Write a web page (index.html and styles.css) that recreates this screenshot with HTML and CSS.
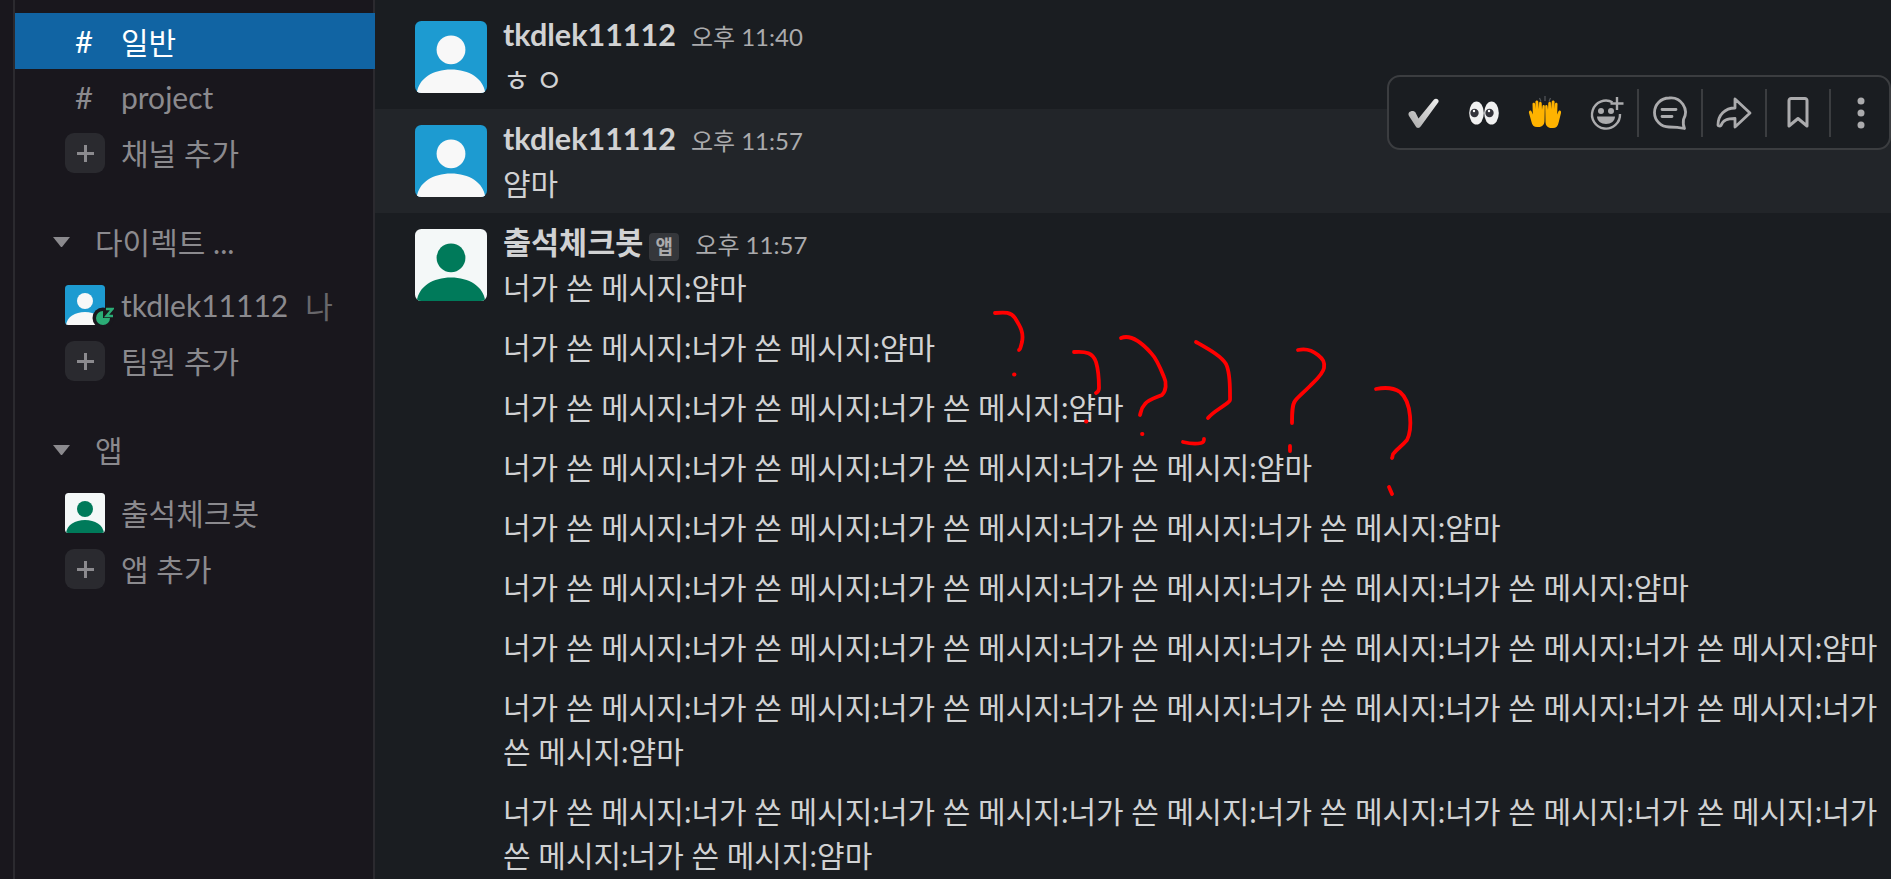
FILE: index.html
```html
<!DOCTYPE html>
<html lang="ko">
<head>
<meta charset="utf-8">
<title>일반</title>
<link rel="stylesheet" href="styles.css">
</head>
<body>
<div class="app">
  <div class="rail"></div>
  <nav class="sidebar">
    <div class="row active"><span class="hash">#</span><span class="label">일반</span></div>
    <div class="row"><span class="hash">#</span><span class="label">project</span></div>
    <div class="row"><span class="plus"><svg viewBox="0 0 17 17" width="17" height="17"><path d="M8.5 0v17M0 8.500h17" stroke="currentColor" stroke-width="3"/></svg></span><span class="label ko">채널 추가</span></div>

    <div class="row head sec"><span class="caret"></span><span class="ko">다이렉트 ...</span></div>
    <div class="row dm">
      <span class="mini"><svg viewBox="0 0 40 40" width="40" height="40"><use href="#p-blue"/></svg><span class="status"><svg viewBox="0 0 24 24" width="24" height="24"><circle cx="13" cy="15" r="10.500" fill="#19171d"/><circle cx="13" cy="15" r="7" fill="#2bac76"/><path d="M13 15 L21 15 L21 8 L13 8Z" fill="#19171d"/><path d="M16 6h6.500l-6 7h6.500" fill="none" stroke="#2bac76" stroke-width="2.400"/></svg></span></span>
      <span class="label">tkdlek11112</span><span class="me">나</span>
    </div>
    <div class="row"><span class="plus"><svg viewBox="0 0 17 17" width="17" height="17"><path d="M8.5 0v17M0 8.500h17" stroke="currentColor" stroke-width="3"/></svg></span><span class="label ko">팀원 추가</span></div>

    <div class="row head sec"><span class="caret"></span><span class="ko">앱</span></div>
    <div class="row dm">
      <span class="mini"><svg viewBox="0 0 40 40" width="40" height="40"><use href="#p-green"/></svg></span>
      <span class="label ko">출석체크봇</span>
    </div>
    <div class="row"><span class="plus"><svg viewBox="0 0 17 17" width="17" height="17"><path d="M8.5 0v17M0 8.500h17" stroke="currentColor" stroke-width="3"/></svg></span><span class="label ko">앱 추가</span></div>
  </nav>

  <main class="main">
    <article class="msg">
      <svg class="avatar" viewBox="0 0 40 40"><use href="#p-blue"/></svg>
      <div class="body">
        <div class="meta"><span class="name">tkdlek11112</span><span class="time">오후 11:40</span></div>
        <p class="jamo">ㅎㅇ</p>
      </div>
    </article>
    <article class="msg hover">
      <svg class="avatar" viewBox="0 0 40 40"><use href="#p-blue"/></svg>
      <div class="body">
        <div class="meta"><span class="name">tkdlek11112</span><span class="time">오후 11:57</span></div>
        <p>얌마</p>
      </div>
      <div class="toolbar">
        <span class="tool"><svg viewBox="0 0 40 40" width="40" height="40"><defs><linearGradient id="chk" x1="0" y1="1" x2="1" y2="0"><stop offset="0" stop-color="#a8a8a8"/><stop offset="1" stop-color="#f0f0f0"/></linearGradient></defs><path d="M5 19.500c2-2 5-2 6.500 0l3 6L30 6.500c2-2 5.500 0 4.500 2.500L17 33c-1.500 2.500-4.500 2.500-5.500 0L5 23c-.7-1.300-.7-2.500 0-3.500z" fill="url(#chk)"/></svg></span>
        <span class="tool"><svg viewBox="0 0 40 40" width="40" height="40"><ellipse cx="11.500" cy="20" rx="7.300" ry="11.500" fill="#f0f0f0"/><ellipse cx="26.500" cy="20" rx="7.300" ry="11.500" fill="#f0f0f0"/><circle cx="9.500" cy="20" r="4.200" fill="#33333a"/><circle cx="24.500" cy="20" r="4.200" fill="#33333a"/><circle cx="9" cy="18" r="1.200" fill="#fff"/><circle cx="24" cy="18" r="1.200" fill="#fff"/></svg></span>
        <span class="tool"><svg viewBox="0 0 40 40" width="40" height="40"><path d="M3 20c-.6-2.500 1.800-3.500 2.800-1l1 2.500L6.500 11c0-1.800 2.400-1.800 2.600 0l.6 5-.3-7c0-2 2.800-2 2.900 0l.6 7 .2-6c.1-1.800 2.600-1.600 2.600.3l.3 6.500.5-3.800c.2-1.500 2.200-1.300 2.300.4L18.500 28c-.2 3.500-2 6-6 6H11c-3 0-5-2-5.500-5z" fill="#ffb300"/><path d="M35 20c.6-2.500-1.800-3.500-2.800-1l-1 2.500.3-10.500c0-1.800-2.400-1.800-2.600 0l-.6 5 .3-7c0-2-2.800-2-2.900 0l-.6 7-.2-6c-.1-1.800-2.600-1.600-2.600.3l-.3 6.500-.5-3.800c-.2-1.500-2.200-1.300-2.300.4l.3 15.600c.2 3.500 2 6 6 6H27c3 0 5-2 5.500-5z" fill="#ffb300"/><path d="M19 3v5M13.500 5l1.500 3.500M24.500 5L23 8.500" stroke="#55585c" stroke-width="1.200"/></svg></span>
        <span class="tool"><svg viewBox="0 0 40 40" width="40" height="40" fill="none" stroke="#ababad" stroke-width="2.400"><path d="M25.500 9.200A14 14 0 1 0 33 21"/><path d="M30 4v13M23.500 10.500h13"/><circle cx="14" cy="18" r="3" fill="#ababad" stroke="none"/><circle cx="24" cy="18" r="3" fill="#ababad" stroke="none"/><path d="M10 23.500h18c0 4.500-4 7.500-9 7.500s-9-3-9-7.500z" fill="#ababad" stroke="none"/></svg></span>
        <span class="sep"></span>
        <span class="tool wide"><svg viewBox="0 0 40 40" width="40" height="40" fill="none" stroke="#ababad" stroke-width="2.800" stroke-linecap="round"><path d="M19 5a14.500 14.500 0 1 0 0 29c5 0 11 .5 15.500 1.500-1.500-3-1.500-5.500-1-9A14.500 14.500 0 0 0 19 5z" stroke-linejoin="round"/><path d="M12 16.500h14M12 23.500h10"/></svg></span>
        <span class="sep"></span>
        <span class="tool wide"><svg viewBox="0 0 40 40" width="40" height="40" fill="none" stroke="#ababad" stroke-width="2.800" stroke-linejoin="round" stroke-linecap="round"><path d="M21 6l15 14-15 14v-8.500c-8 0-12 1.500-14 7-1 1-2.500.5-3-.5 0-10 7-17 17-17z"/></svg></span>
        <span class="sep"></span>
        <span class="tool wide"><svg viewBox="0 0 40 40" width="40" height="40" fill="none" stroke="#ababad" stroke-width="3" stroke-linejoin="round"><path d="M11 7.500c0-1 1-2 2-2h14c1 0 2 1 2 2V33l-9-7.500L11 33z"/></svg></span>
        <span class="sep"></span>
        <span class="tool wide"><svg viewBox="0 0 40 40" width="40" height="40" fill="#ababad"><circle cx="19" cy="8" r="3.500"/><circle cx="19" cy="20" r="3.500"/><circle cx="19" cy="32" r="3.500"/></svg></span>
      </div>
    </article>
    <article class="msg">
      <svg class="avatar" viewBox="0 0 40 40"><use href="#p-green"/></svg>
      <div class="body">
        <div class="meta"><span class="name">출석체크봇</span><span class="badge">앱</span><span class="time">오후 11:57</span></div>
        <p>너가 쓴 메시지:얌마</p>
        <p class="para">너가 쓴 메시지:너가 쓴 메시지:얌마</p>
        <p class="para">너가 쓴 메시지:너가 쓴 메시지:너가 쓴 메시지:얌마</p>
        <p class="para">너가 쓴 메시지:너가 쓴 메시지:너가 쓴 메시지:너가 쓴 메시지:얌마</p>
        <p class="para">너가 쓴 메시지:너가 쓴 메시지:너가 쓴 메시지:너가 쓴 메시지:너가 쓴 메시지:얌마</p>
        <p class="para">너가 쓴 메시지:너가 쓴 메시지:너가 쓴 메시지:너가 쓴 메시지:너가 쓴 메시지:너가 쓴 메시지:얌마</p>
        <p class="para">너가 쓴 메시지:너가 쓴 메시지:너가 쓴 메시지:너가 쓴 메시지:너가 쓴 메시지:너가 쓴 메시지:너가 쓴 메시지:얌마</p>
        <p class="para">너가 쓴 메시지:너가 쓴 메시지:너가 쓴 메시지:너가 쓴 메시지:너가 쓴 메시지:너가 쓴 메시지:너가 쓴 메시지:너가 쓴 메시지:얌마</p>
        <p class="para">너가 쓴 메시지:너가 쓴 메시지:너가 쓴 메시지:너가 쓴 메시지:너가 쓴 메시지:너가 쓴 메시지:너가 쓴 메시지:너가 쓴 메시지:너가 쓴 메시지:얌마</p>
      </div>
    </article>
    <svg class="scribble" viewBox="0 0 1516 879" fill="none" stroke="#f00" stroke-width="3.800" stroke-linecap="round" stroke-linejoin="round">
      <g transform="translate(585 290)">
        <path d="M35 23c10-1 16-1 20 5 5 8 9 14 7 24-1 4-2 8-3 8"/>
        <path d="M54 84.500l.5 0"/>
        <path d="M114 62c12-1 19 1 22 10 3 10 3 20 3 26 0 3-1 4-3 5"/>
        <path d="M126 131.500l.5 0"/>
        <path d="M161 48c10-4 22 6 30 15 5 5 9 14 13 24 3 6 2 14-2 18-7 3-14 5-17 9-4 4-4 8-5 11"/>
        <path d="M182 144l.5 0"/>
        <path d="M236 52c14 8 25 14 30 22 4 8 4 20 4 30 0 8 1 6-4 10-8 6-13 8-18 14"/>
        <path d="M223 152c8 2 14 2 18 1 3-1 3-2 3-4"/>
        <path d="M338 60c8-2 14 0 20 5 5 4 7 7 6 13-1 6-8 12-14 18-8 8-12 11-15 15-3 4-3 12-3 22"/>
        <path d="M330 156v5"/>
        <path d="M416 99c10-2 18-1 24 3 6 5 9 13 10 24 1 10 0 18-3 24-5 6-9 8-13 13-2 1-1 4-2 5"/>
        <path d="M429 197l3 7"/>
      </g>
    </svg>
  </main>
</div>

<svg class="defs" width="0" height="0" aria-hidden="true">
  <defs>
    <clipPath id="rr"><rect width="40" height="40" rx="3.500"/></clipPath>
    <g id="p-blue" clip-path="url(#rr)">
      <rect width="40" height="40" fill="#1d9bd1"/>
      <circle cx="20" cy="16" r="8" fill="#f8f8f8"/>
      <path d="M1 40c1-8 9-13 19-13s18 5 19 13z" fill="#f8f8f8"/>
    </g>
    <g id="p-green" clip-path="url(#rr)">
      <rect width="40" height="40" fill="#f4f8f8"/>
      <circle cx="20" cy="16" r="8" fill="#007a5a"/>
      <path d="M1 40c1-8 9-13 19-13s18 5 19 13z" fill="#007a5a"/>
    </g>
  </defs>
</svg>
</body>
</html>
```
FILE: styles.css
```css
* { box-sizing: border-box; }
html, body { margin: 0; height: 100%; overflow: hidden; }
body {
  background: #1a1d21;
  color: #d1d2d3;
  font-family: Lato, "Noto Sans CJK KR", sans-serif;
  font-size: 30px;
}
.app { display: flex; height: 879px; overflow: hidden; }
.rail { width: 15px; flex: none; background: #19171d; border-right: 2px solid #2b2a2f; }
.sidebar {
  width: 360px; flex: none; padding-top: 13px;
  background: #19171d; border-right: 2px solid #2b2a2f;
  color: #8b8a8e;
}
.row { display: flex; align-items: center; height: 56px; padding-left: 50px; }
.row.active { background: #1164a3; color: #fff; margin-right: -2px; position: relative; }
.hash { width: 40px; text-align: center; font-size: 31px; margin-left: -1px; margin-right: 1px; }
.label { margin-left: 16px; white-space: nowrap; }
.ko { padding-bottom: 2px; }
.plus {
  width: 40px; height: 40px; border-radius: 9px; background: #2a2a2f;
  display: flex; align-items: center; justify-content: center; color: #8b8a8e;
}
.plus svg { display: block; }
.head { padding-left: 38px; }
.sec { margin-top: 33px; margin-bottom: 7px; }
.caret {
  width: 17px; margin-right: 25px;
  border-left: 8.5px solid transparent; border-right: 8.5px solid transparent;
  border-top: 10px solid #8b8a8e;
}
.mini { position: relative; width: 40px; height: 40px; flex: none; }
.mini > svg { display: block; }
.status { position: absolute; right: -9px; bottom: -2px; width: 24px; height: 24px; }
.status svg { display: block; }
.me { margin-left: 17px; color: #68676b; }

.main { flex: 1; min-width: 0; position: relative; padding-top: 5px; }
.msg { display: flex; position: relative; padding: 16px 8px 16px 40px; }
.msg.hover { background: #222529; }
.avatar { width: 72px; height: 72px; flex: none; display: block; }
.body { margin-left: 16px; min-width: 0; flex: 1; margin-bottom: -8px; }
.meta { display: flex; align-items: baseline; height: 36px; line-height: 26px; }
.name { font-weight: 700; font-size: 30.500px; color: #d1d2d3; }
.time { margin-left: 15px; font-size: 24px; color: #ababad; }
.badge {
  margin-left: 6px; width: 30px; height: 28px; line-height: 28px; text-align: center;
  font-size: 19px; font-weight: 700; border-radius: 4px;
  background: #35373b; color: #ababad;
}
.badge + .time { margin-left: 16px; }
p { margin: 0; line-height: 44px; color: #d1d2d3; }
.para { margin-top: 16px; }
.jamo { letter-spacing: 5px; }
.toolbar {
  position: absolute; left: 1012px; top: -34px; width: 504px; height: 75px;
  display: flex; align-items: center; padding-left: 4px;
  background: #1a1d21; border: 2px solid #3b3d40; border-radius: 13px;
}
.tool { width: 61px; height: 60px; display: flex; align-items: center; justify-content: center; flex: none; }
.tool.wide { width: 62px; }
.sep { width: 2px; height: 48px; background: #3b3d40; flex: none; }
.scribble { position: absolute; left: 0; top: 0; width: 1516px; height: 879px; pointer-events: none; }
.defs { position: absolute; }
```
